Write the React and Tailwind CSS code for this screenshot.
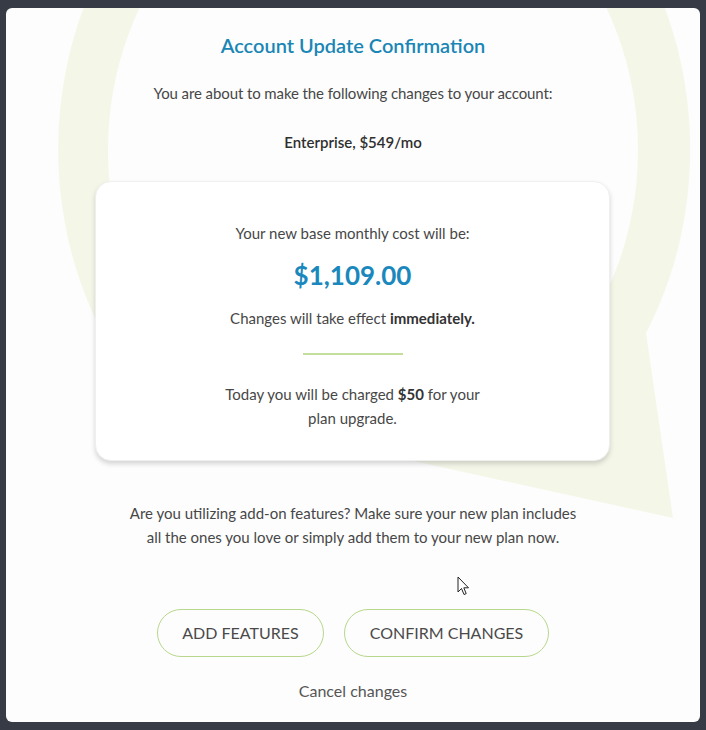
import React from 'react';

const font = { fontFamily: 'Lato, "Open Sans", sans-serif' };

const BubbleBackdrop = () => (
  <svg
    className="absolute left-[-6px] top-[-8px] w-[706px] h-[730px] pointer-events-none"
    viewBox="0 0 706 730"
  >
    <path d="M 95 318 A 316 360 0 1 1 646 333 L 673 518 L 400 458 Z" fill="#f4f7e8" />
    <ellipse cx="373" cy="150" rx="265" ry="300" fill="#fdfdfd" />
  </svg>
);

const Cursor = () => (
  <svg className="absolute left-[451px] top-[568px] w-[13px] h-[20px]" viewBox="0 0 13 20">
    <path
      d="M1 1 L1 16 L4.5 12.5 L7 18.5 L9.2 17.6 L6.8 11.8 L11.5 11.8 Z"
      fill="#ffffff"
      stroke="#222"
      strokeWidth="1"
      strokeLinejoin="round"
    />
  </svg>
);

export default function App() {
  return (
    <div className="w-[706px] h-[730px] bg-[#363b45] pt-[8px] pl-[6px]" style={font}>
      <div className="relative w-[694px] h-[714px] bg-[#fdfdfd] rounded-[6px] overflow-hidden">
        <BubbleBackdrop />
        <Cursor />

        <div className="relative flex flex-col items-center pt-[23px] text-[15px] leading-[24px] text-[#474747]">
          {/* Header */}
          <h2 className="text-[20px] leading-[28px] font-semibold text-[#1a86b6]">
            Account Update Confirmation
          </h2>
          <p className="mt-[22px] tracking-[-0.1px]">
            You are about to make the following changes to your account:
          </p>
          <p className="mt-[25px] font-semibold text-[#2f2f2f]">Enterprise, $549/mo</p>

          {/* Cost card */}
          <div className="mt-[27px] w-[515px] h-[280px] ml-[-1px] bg-white rounded-[16px] border border-[#efefef] shadow-[0_3px_5px_rgba(0,0,0,0.16)] flex flex-col items-center pt-[39px]">
            <p>Your new base monthly cost will be:</p>
            <p className="mt-[13px] text-[26px] leading-[34px] font-bold text-[#1a88bd]">$1,109.00</p>
            <p className="mt-[14px]">
              Changes will take effect <span className="font-bold text-[#333]">immediately.</span>
            </p>
            <div className="mt-[23px] w-[100px] h-[2px] bg-[#c4de9c]" />
            <p className="mt-[27px] w-[270px] text-center">
              Today you will be charged <span className="font-bold text-[#333]">$50</span> for your plan
              upgrade.
            </p>
          </div>

          <p className="mt-[40px] w-[460px] text-center">
            Are you utilizing add-on features? Make sure your new plan includes all the ones you love or
            simply add them to your new plan now.
          </p>

          {/* Actions */}
          <div className="mt-[60px] flex gap-[20px]">
            <button className="w-[167px] h-[48px] rounded-full border border-[#b7d78c] text-[16px] text-[#4a4a4a] uppercase">
              Add Features
            </button>
            <button className="w-[205px] h-[48px] rounded-full border border-[#b7d78c] text-[16px] text-[#4a4a4a] uppercase">
              Confirm Changes
            </button>
          </div>
          <button className="mt-[22px] text-[16px] leading-[24px] text-[#555]">Cancel changes</button>
        </div>
      </div>
    </div>
  );
}
